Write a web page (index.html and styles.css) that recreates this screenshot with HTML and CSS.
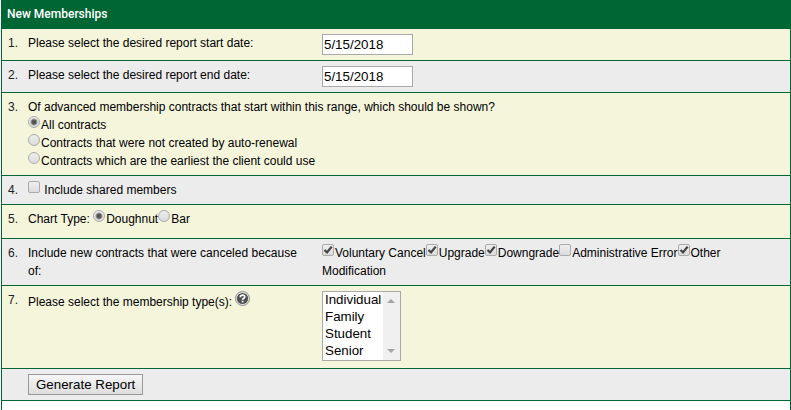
FILE: index.html
```
<!DOCTYPE html>
<html lang="en">
<head>
    <meta charset="UTF-8">
    <title>New Memberships</title>
    <link rel="stylesheet" href="styles.css">
</head>
<body>

<form class="report">
    <h1 class="report-title">New Memberships</h1>

    <div class="row">
        <span class="num">1.</span>
        <label for="start-date">Please select the desired report start date:</label>
        <div><input type="text" class="date" id="start-date" value="5/15/2018"></div>
    </div>

    <div class="row">
        <span class="num">2.</span>
        <label for="end-date">Please select the desired report end date:</label>
        <div><input type="text" class="date" id="end-date" value="5/15/2018"></div>
    </div>

    <div class="row">
        <span class="num">3.</span>
        <div class="wide" role="radiogroup" aria-labelledby="shown-label">
            <div id="shown-label">Of advanced membership contracts that start within this range, which should be shown?</div>
            <div><input type="radio" name="shown" id="shown-all" checked><label for="shown-all">All contracts</label></div>
            <div><input type="radio" name="shown" id="shown-manual"><label for="shown-manual">Contracts that were not created by auto-renewal</label></div>
            <div><input type="radio" name="shown" id="shown-earliest"><label for="shown-earliest">Contracts which are the earliest the client could use</label></div>
        </div>
    </div>

    <div class="row">
        <span class="num">4.</span>
        <div class="wide"><input type="checkbox" id="shared"> <label for="shared">Include shared members</label></div>
    </div>

    <div class="row row-chart">
        <span class="num">5.</span>
        <div class="wide" role="radiogroup" aria-labelledby="chart-label">
            <span id="chart-label">Chart Type:</span>
            <input type="radio" name="chart" id="doughnut" checked><label for="doughnut">Doughnut</label><input type="radio" name="chart" id="bar"><label for="bar">Bar</label>
        </div>
    </div>

    <div class="row">
        <span class="num">6.</span>
        <div id="canceled-label">Include new contracts that were canceled because of:</div>
        <div role="group" aria-labelledby="canceled-label">
            <input type="checkbox" id="voluntary" checked><label for="voluntary">Voluntary Cancel</label><input type="checkbox" id="upgrade" checked><label for="upgrade">Upgrade</label><input type="checkbox" id="downgrade" checked><label for="downgrade">Downgrade</label><input type="checkbox" id="admin-error"><label for="admin-error">Administrative Error</label><input type="checkbox" id="other" checked><label for="other">Other Modification</label>
        </div>
    </div>

    <div class="row row-types">
        <span class="num">7.</span>
        <div>
            <label for="types">Please select the membership type(s):</label>
            <svg class="help" viewBox="0 0 15 15" role="img" aria-label="Help">
                <circle cx="7.5" cy="7.5" r="7" fill="#e8e8e8" stroke="#8c8c8c"/>
                <circle cx="7.5" cy="7.5" r="5.6" fill="#505050"/>
                <path d="M5.3 6.2C5.3 3.5 9.8 3.6 9.8 5.9 9.8 7.3 7.6 7.2 7.6 8.8" fill="none" stroke="#fff" stroke-width="1.7"/>
                <rect x="6.7" y="9.7" width="1.8" height="1.7" fill="#fff"/>
            </svg>
        </div>
        <div>
            <select class="types" id="types" size="4" multiple>
                <option>Individual</option>
                <option>Family</option>
                <option>Student</option>
                <option>Senior</option>
            </select>
        </div>
    </div>

    <div class="row">
        <span class="num"></span>
        <div class="wide"><button type="button" class="generate">Generate Report</button></div>
    </div>
</form>

</body>
</html>
```

FILE: styles.css
```
* { box-sizing: border-box; }
body {
    margin: 0;
    background: #fff;
    color: #000;
    font: 12px/18px "Liberation Sans", Arial, sans-serif;
}
.report {
    min-height: 100vh;
    margin-left: 1px;
    border: solid #063;
    border-width: 0 1px;
}
.report-title {
    margin: 0;
    padding: 5px 5px 6px;
    background: #063;
    color: #fff;
    font-family: Roboto, Arial, sans-serif;
    font-size: 12px;
    font-weight: 500;
}

/* rows: number, question, answer */
.row {
    display: grid;
    grid-template-columns: 20px 282px 1fr;
    padding: 5px 6px;
    border-bottom: 1px solid #063;
    background: #ececec;
}
.row:nth-of-type(odd) { background: #f5f5dc; }
.row > :nth-child(3) { padding-left: 12px; }
.wide { grid-column: 2 / 4; }
.num { color: #222; }
.row-chart { padding-bottom: 10px; }
.row-types { padding-bottom: 7px; }

input, select, button {
    margin: 0;
    font-family: inherit;
    vertical-align: top;
}
.date {
    display: block;
    width: 91px;
    height: 21px;
    padding: 1px;
    border: 1px solid #a9a9a9;
    background: #fff;
}

/* ticks and radios */
[type="checkbox"], [type="radio"] {
    appearance: none;
    width: 12px;
    height: 12px;
    margin-right: 1px;
    border: 1px solid #aaa;
    border-radius: 2px;
    background: linear-gradient(#eee, #dcdcdc);
}
[type="radio"] { border-radius: 50%; }
[type="radio"]:checked {
    background: radial-gradient(circle, #555 0 2px, transparent 4px), linear-gradient(#eee, #dcdcdc);
}
[type="checkbox"]:checked {
    background: url("data:image/svg+xml,%3Csvg xmlns='http://www.w3.org/2000/svg' viewBox='0 0 10 10'%3E%3Cpath d='M1.5 5L4 7.4 8.7 1.6' fill='none' stroke='%23444' stroke-width='2.3'/%3E%3C/svg%3E"), linear-gradient(#eee, #dcdcdc);
}

.help {
    width: 15px;
    height: 15px;
    vertical-align: baseline;
}

/* list box with its scroll track on the right */
.types {
    display: block;
    appearance: none;
    width: 79px;
    height: 70px;
    padding: 0;
    border: 1px solid #a9a9a9;
    border-radius: 0;
    overflow: hidden;
    color: #000;
    background: #fff url("data:image/svg+xml,%3Csvg xmlns='http://www.w3.org/2000/svg' width='17' height='68'%3E%3Cpath d='M0 0h17v68H0z' fill='%23f0f0f0'/%3E%3Cpath d='M4 11l4-4 4 4zM4 57h8l-4 4z' fill='%23a3a3a3'/%3E%3C/svg%3E") right top no-repeat;
}
.types option {
    min-height: 17px;
    padding: 0 2px 1px;
    line-height: 16px;
}

.generate {
    height: 21px;
    padding: 0 7px;
    border: 1px solid #999;
    border-radius: 0;
    background: linear-gradient(#f6f6f6, #dedede);
    color: #000;
}
```
